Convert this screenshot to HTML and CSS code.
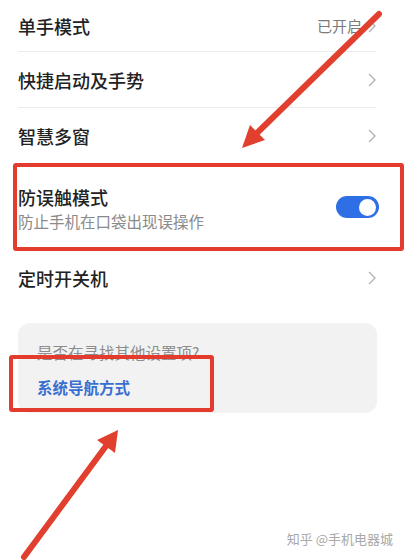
FILE: index.html
```html
<!DOCTYPE html>
<html lang="zh-CN">
<head>
  <meta charset="UTF-8" />
  <title>辅助功能</title>
  <link rel="stylesheet" href="styles.css">
</head>
<body>
  <div class="phone">

    <!-- Settings list -->
    <div class="list">
      <div class="row first">
        <span class="label">单手模式</span>
        <span class="value">已开启</span>
        <svg class="chev" width="8" height="14" viewBox="0 0 8 14"><polyline points="1,1 7,7 1,13" fill="none" stroke="#b3b3b3" stroke-width="1.4" /></svg>
      </div>
      <div class="row">
        <span class="label">快捷启动及手势</span>
        <svg class="chev" width="8" height="14" viewBox="0 0 8 14"><polyline points="1,1 7,7 1,13" fill="none" stroke="#b3b3b3" stroke-width="1.4" /></svg>
      </div>
      <div class="row">
        <span class="label">智慧多窗</span>
        <svg class="chev" width="8" height="14" viewBox="0 0 8 14"><polyline points="1,1 7,7 1,13" fill="none" stroke="#b3b3b3" stroke-width="1.4" /></svg>
      </div>
      <div class="row tall">
        <div class="texts">
          <span class="label">防误触模式</span>
          <span class="sub">防止手机在口袋出现误操作</span>
        </div>
        <span class="switch on"><span class="knob"></span></span>
      </div>
      <div class="row last">
        <span class="label">定时开关机</span>
        <svg class="chev" width="8" height="14" viewBox="0 0 8 14"><polyline points="1,1 7,7 1,13" fill="none" stroke="#b3b3b3" stroke-width="1.4" /></svg>
      </div>
    </div>

    <!-- Suggestion card -->
    <div class="card">
      <p class="ask">是否在寻找其他设置项?</p>
      <a class="link">系统导航方式</a>
    </div>

    <!-- Annotations drawn on top of the screenshot -->
    <div class="mark mark-toggle"></div>
    <div class="mark mark-link"></div>
    <svg class="arrows" width="404" height="560" viewBox="0 0 404 560">
      <line x1="379" y1="14" x2="257" y2="133" stroke="#e2402f" stroke-width="6" stroke-linecap="round" />
      <polygon points="242,148 265,140 250,125" fill="#e2402f" />
      <line x1="24" y1="557" x2="106" y2="446" stroke="#e2402f" stroke-width="6" stroke-linecap="round" />
      <polygon points="118,430 115,453 97,440" fill="#e2402f" />
    </svg>

    <div class="watermark">知乎 @手机电器城</div>
  </div>
</body>
</html>
```

FILE: styles.css
```css
* {
  margin: 0; padding: 0;
  box-sizing: border-box;
}
body {
  background-color: #fff;
  font-family: "Noto Sans CJK SC", "Noto Sans", sans-serif;
  color: #1e1e1e;
}
.phone {
  position: relative;
  width: 404px;
  height: 560px;
  overflow: hidden;
  background-color: #fff;
}
.list {
  display: flex;
  flex-direction: column;
  padding: 0 28px 0 18px;
}
.row {
  display: flex;
  align-items: center;
  height: 56px;
  border-bottom: 1px solid #ececec;
}
.row.first {
  height: 52px;
}
.row.tall {
  height: 86px;
  border-bottom: none;
}
.row.last {
  border-bottom: none;
}
.label {
  flex: 1;
  font-size: 18px;
  line-height: 24px;
  font-weight: 500;
  color: #222;
}
.value {
  font-size: 15px;
  color: #7a7a7a;
  margin-right: 6px;
}
.chev {
  display: block;
}
.texts {
  flex: 1;
  display: flex;
  flex-direction: column;
  padding-top: 2px;
}
.sub {
  font-size: 15.5px;
  line-height: 22px;
  color: #8a8a8a;
  margin-top: 1px;
}
.switch {
  width: 43px;
  height: 22px;
  border-radius: 11px;
  background-color: #2f6fe6;
  display: flex;
  align-items: center;
  justify-content: flex-end;
  padding: 0 3px;
  margin-right: -3px;
}
.knob {
  width: 17px;
  height: 17px;
  border-radius: 50%;
  background-color: #fff;
}
.card {
  margin: 17px 27px 0 18px;
  height: 90px;
  background-color: #f2f2f2;
  border-radius: 12px;
  padding: 18px 19px 0;
}
.ask {
  font-size: 15.5px;
  line-height: 22px;
  color: #8c8c8c;
}
.link {
  display: block;
  margin-top: 13px;
  font-size: 15.5px;
  line-height: 22px;
  color: #3a6fd0;
  font-weight: bold;
}
.mark {
  position: absolute;
  border: 4px solid #e33b2e;
  border-radius: 3px;
}
.mark-toggle {
  left: 13px;
  top: 163px;
  width: 391px;
  height: 88px;
}
.mark-link {
  left: 9px;
  top: 355px;
  width: 205px;
  height: 57px;
}
.arrows {
  position: absolute;
  left: 0;
  top: 0;
}
.watermark {
  position: absolute;
  right: 11px;
  bottom: 12px;
  font-size: 13px;
  color: #a8a8a8;
}
```
